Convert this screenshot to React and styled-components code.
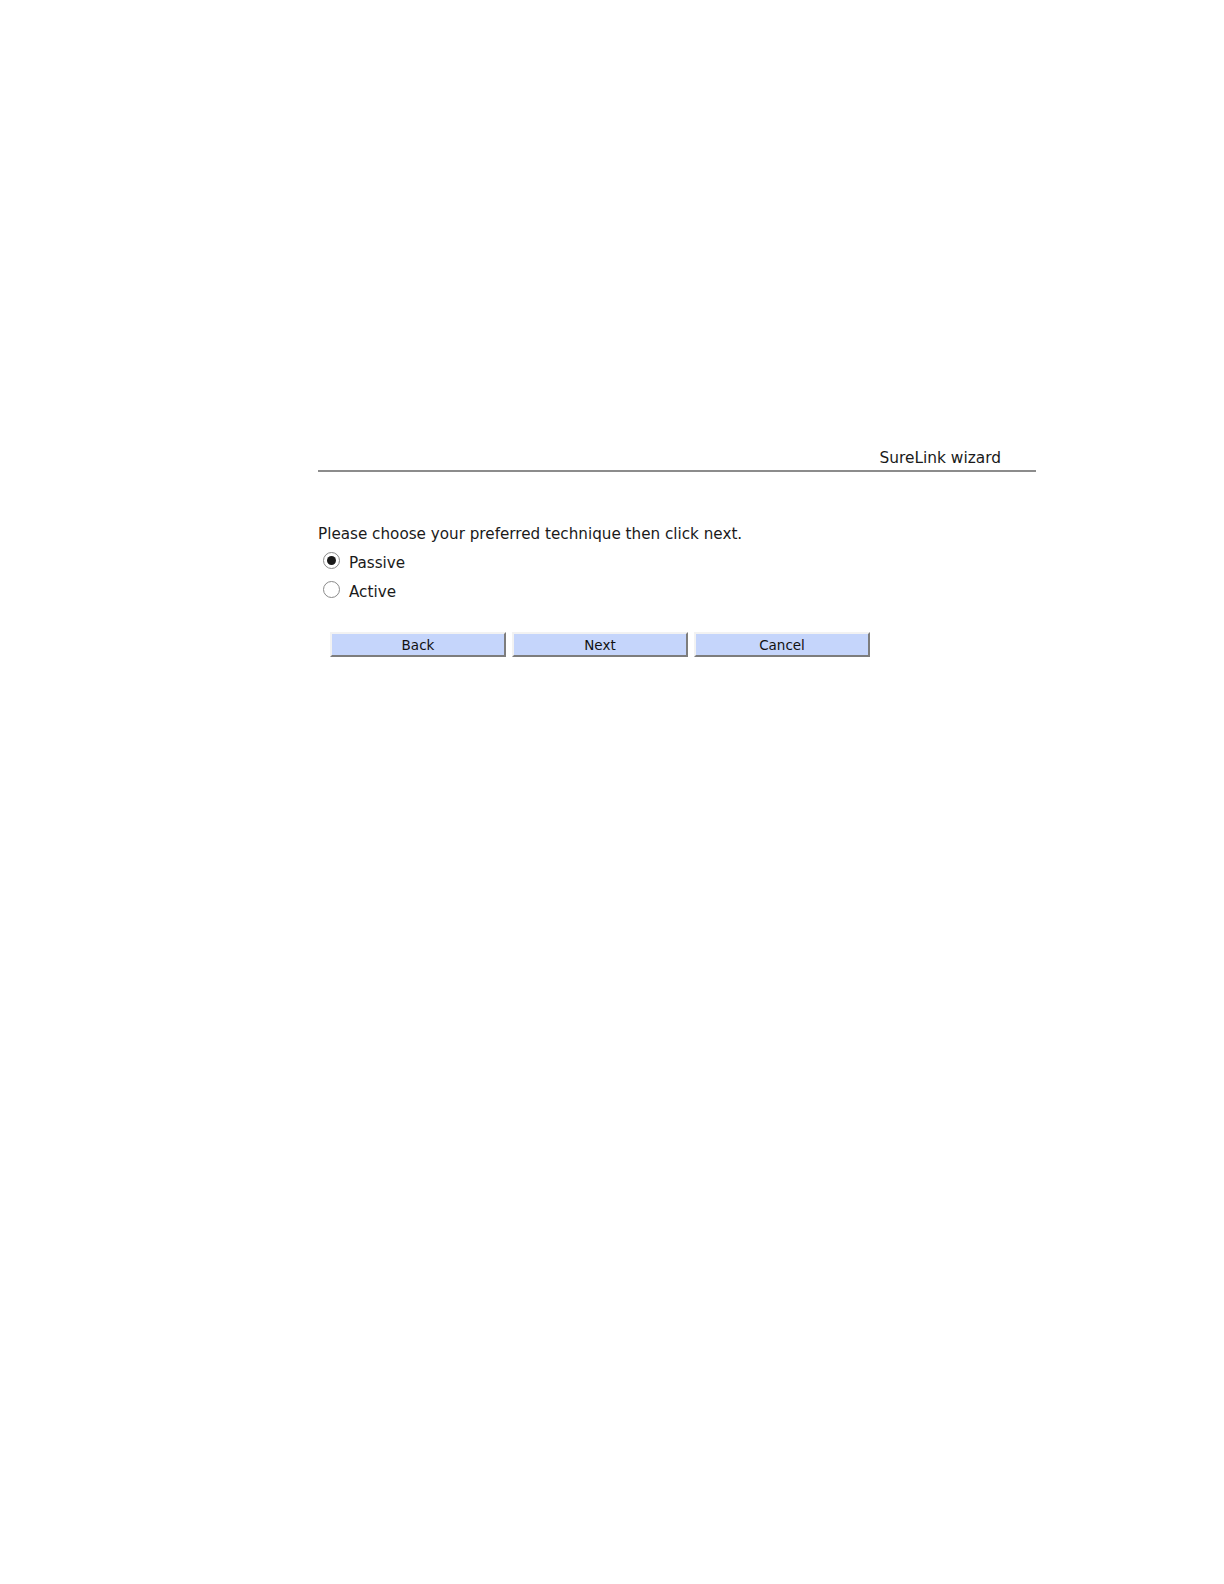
import React, { useState } from 'react'
import styled, { createGlobalStyle } from 'styled-components'

const Global = createGlobalStyle`
  html, body { margin: 0; padding: 0; background: #fff; }
  body { font-family: "DejaVu Sans", Verdana, sans-serif; color: #1a1a1a; }
`

const Page = styled.div`
  padding-top: 448px;
`

const Wizard = styled.section`
  margin-left: 318px;
  width: 718px;
`

const Header = styled.div`
  display: flex;
  justify-content: flex-end;
  padding-right: 35px;
  padding-bottom: 2px;
  border-bottom: 2px solid #8c8c8c;
  font-size: 15.4px;
  line-height: 20px;
`

const Prompt = styled.p`
  margin: 52px 0 0;
  font-size: 15.2px;
  line-height: 20px;
`

const Options = styled.div`
  display: flex;
  flex-direction: column;
  gap: 9px;
  margin-top: 9px;
  padding-left: 5px;
`

const Option = styled.label`
  display: flex;
  align-items: center;
  gap: 9px;
  font-size: 15.2px;
  line-height: 20px;
`

const Radio = styled.input.attrs({ type: 'radio' })`
  appearance: none;
  margin: -6px 0 0;
  width: 17px;
  height: 17px;
  border-radius: 50%;
  border: 1px solid #8a8a8a;
  background: #fff;
  position: relative;
  &:checked::after {
    content: '';
    position: absolute;
    left: 3px;
    top: 3px;
    width: 9px;
    height: 9px;
    border-radius: 50%;
    background: #1a1a1a;
  }
`

const Buttons = styled.div`
  display: flex;
  gap: 6px;
  margin-top: 30px;
  padding-left: 12px;
`

const Button = styled.button`
  width: 176px;
  height: 25px;
  padding: 0;
  font-family: "DejaVu Sans", Verdana, sans-serif;
  font-size: 13.5px;
  color: #111;
  background: #c5d5fb;
  border-style: solid;
  border-width: 2px;
  border-color: #f2f2f2 #7d7d7d #7d7d7d #f2f2f2;
`

export default function App() {
  const [mode, setMode] = useState('passive')
  return (
    <Page>
      <Global />
      <Wizard>
        <Header>SureLink wizard</Header>
        <Prompt>Please choose your preferred technique then click next.</Prompt>
        <Options>
          <Option>
            <Radio name="technique" checked={mode === 'passive'} onChange={() => setMode('passive')} />
            Passive
          </Option>
          <Option>
            <Radio name="technique" checked={mode === 'active'} onChange={() => setMode('active')} />
            Active
          </Option>
        </Options>
        <Buttons>
          <Button>Back</Button>
          <Button>Next</Button>
          <Button>Cancel</Button>
        </Buttons>
      </Wizard>
    </Page>
  )
}
